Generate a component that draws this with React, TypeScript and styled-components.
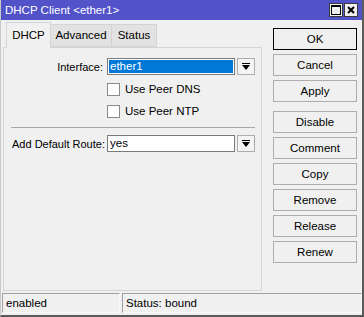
import React from 'react'
import styled, { createGlobalStyle } from 'styled-components'

const GlobalStyle = createGlobalStyle`
  html, body {
    margin: 0;
    padding: 0;
    background: #f0f0f0;
  }
  body {
    font-family: "Liberation Sans", Arial, sans-serif;
    font-size: 11px;
    color: #000;
  }
`

const Window = styled.div`
  width: 364px;
  height: 317px;
  box-sizing: border-box;
  display: flex;
  flex-direction: column;
  background: #f0f0f0;
  border-right: 2px solid #5a5a5a;
  border-bottom: 2px solid #5a5a5a;
  border-left: 1px solid #c8c8c8;
  overflow: hidden;
`

const TitleBar = styled.div`
  height: 20px;
  flex: none;
  background: #5252c9;
  display: flex;
  align-items: center;
  padding: 0 4px 0 4px;
  color: #fff;
`

const Title = styled.span`
  flex: 1;
  font-size: 11.5px;
  line-height: 20px;
`

const TitleButton = styled.div`
  width: 12px;
  height: 12px;
  margin-left: 1px;
  background: #f0f0f0;
  border: 1px solid #3a3a3a;
  display: flex;
  align-items: center;
  justify-content: center;
`

const Body = styled.div`
  flex: 1;
  display: flex;
  padding: 2px 0 0 2px;
  min-height: 0;
`

const LeftSide = styled.div`
  width: 259px;
  display: flex;
  flex-direction: column;
`

const TabStrip = styled.div`
  display: flex;
  align-items: flex-end;
  height: 25px;
  padding-left: 3px;
  position: relative;
  z-index: 1;
`

const Tab = styled.div<{ $w: number; $active?: boolean }>`
  box-sizing: border-box;
  width: ${p => p.$w}px;
  height: ${p => (p.$active ? 26 : 23)}px;
  margin-bottom: ${p => (p.$active ? -1 : 0)}px;
  display: flex;
  align-items: center;
  justify-content: center;
  background: ${p => (p.$active ? '#f0f0f0' : '#e2e2e2')};
  border: 1px solid #d4d4d4;
  border-bottom: ${p => (p.$active ? 'none' : '1px solid #d4d4d4')};
  margin-right: -1px;
  font-size: 11.5px;
  line-height: 1;
`

const Panel = styled.div`
  flex: 1;
  border: 1px solid #d4d4d4;
  padding: 10px 6px 0 7px;
  display: flex;
  flex-direction: column;
`

const FieldRow = styled.div`
  display: flex;
  align-items: center;
  height: 17px;
`

const Label = styled.span`
  box-sizing: border-box;
  flex: none;
  width: 96px;
  text-align: right;
  padding-right: 4px;
  white-space: nowrap;
`

const LeftLabel = styled(Label)`
  text-align: left;
  padding-right: 0;
  padding-left: 1px;
`

const Input = styled.div<{ $selected?: boolean }>`
  box-sizing: border-box;
  width: 131px;
  height: 17px;
  border: 1px solid #7a7a7a;
  background: ${p => (p.$selected ? '#0078d7' : '#fff')};
  color: ${p => (p.$selected ? '#fff' : '#000')};
  padding: 0 2px;
  line-height: 15px;
  font-size: 11.5px;
  ${p => (p.$selected ? 'outline: 1px solid #fff; outline-offset: -2px;' : '')}
`

const DropButton = styled.div`
  box-sizing: border-box;
  width: 18px;
  height: 17px;
  margin-left: 2px;
  border: 1px solid #adadad;
  background: #f4f4f4;
  display: flex;
  align-items: center;
  justify-content: center;
`

const CheckRow = styled.div<{ $first?: boolean }>`
  display: flex;
  align-items: center;
  height: 22px;
  padding-left: 96px;
  margin-top: ${p => (p.$first ? 3 : 0)}px;
  font-size: 11.5px;
`

const Box = styled.div`
  box-sizing: border-box;
  width: 13px;
  height: 13px;
  border: 1px solid #8a8a8a;
  background: #fff;
  margin-right: 5px;
`

const Separator = styled.div`
  height: 1px;
  background: #a8a8a8;
  margin: 5px 0 7px 0;
`

const Buttons = styled.div`
  margin-left: 11px;
  padding-top: 6px;
  display: flex;
  flex-direction: column;
  gap: 4px;
`

const Button = styled.div<{ $default?: boolean; $gapAbove?: boolean }>`
  box-sizing: border-box;
  width: 84px;
  height: 22px;
  border: 1px solid ${p => (p.$default ? '#000' : '#adadad')};
  background: #f0f0f0;
  display: flex;
  align-items: center;
  justify-content: center;
  font-size: 11.5px;
  margin-top: ${p => (p.$gapAbove ? 5 : 0)}px;
`

const StatusBar = styled.div`
  flex: none;
  height: 22px;
  display: flex;
  gap: 2px;
  padding: 2px 0 0 1px;
`

const StatusField = styled.div<{ $w?: number }>`
  box-sizing: border-box;
  height: 20px;
  ${p => (p.$w ? `width: ${p.$w}px;` : 'flex: 1;')}
  border: 1px solid #a0a0a0;
  border-right-color: #f8f8f8;
  border-bottom-color: #f8f8f8;
  padding: 0 3px;
  line-height: 18px;
  font-size: 11.5px;
`

const Arrow = () => (
  <svg width="8" height="8" viewBox="0 0 8 8">
    <rect x="0" y="0" width="8" height="1" fill="#000" />
    <path d="M0 2 H8 L4 7 Z" fill="#000" />
  </svg>
)

export default function App() {
  return (
    <>
      <GlobalStyle />
      <Window>
        <TitleBar>
          <Title>DHCP Client &lt;ether1&gt;</Title>
          <TitleButton>
            <svg width="10" height="10" viewBox="0 0 10 10">
              <rect x="0.5" y="0.5" width="9" height="9" fill="none" stroke="#000" />
              <rect x="0" y="0" width="10" height="2" fill="#000" />
            </svg>
          </TitleButton>
          <TitleButton>
            <svg width="8" height="8" viewBox="0 0 8 8">
              <path d="M1 1 L7 7 M7 1 L1 7" stroke="#000" strokeWidth="2" />
            </svg>
          </TitleButton>
        </TitleBar>
        <Body>
          <LeftSide>
            <TabStrip>
              <Tab $w={45} $active>DHCP</Tab>
              <Tab $w={62}>Advanced</Tab>
              <Tab $w={46}>Status</Tab>
            </TabStrip>
            <Panel>
              <FieldRow>
                <Label>Interface:</Label>
                <Input $selected>ether1</Input>
                <DropButton><Arrow /></DropButton>
              </FieldRow>
              <CheckRow $first>
                <Box />
                Use Peer DNS
              </CheckRow>
              <CheckRow>
                <Box />
                Use Peer NTP
              </CheckRow>
              <Separator />
              <FieldRow>
                <LeftLabel>Add Default Route:</LeftLabel>
                <Input>yes</Input>
                <DropButton><Arrow /></DropButton>
              </FieldRow>
            </Panel>
          </LeftSide>
          <Buttons>
            <Button $default>OK</Button>
            <Button>Cancel</Button>
            <Button>Apply</Button>
            <Button $gapAbove>Disable</Button>
            <Button>Comment</Button>
            <Button>Copy</Button>
            <Button>Remove</Button>
            <Button>Release</Button>
            <Button>Renew</Button>
          </Buttons>
        </Body>
        <StatusBar>
          <StatusField $w={118}>enabled</StatusField>
          <StatusField>Status: bound</StatusField>
        </StatusBar>
      </Window>
    </>
  )
}
